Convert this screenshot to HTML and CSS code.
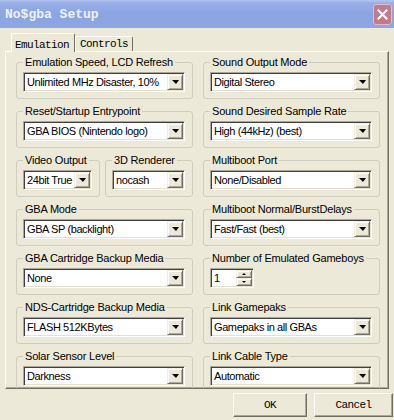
FILE: index.html
```html
<!DOCTYPE html>
<html lang="en">
<head>
  <meta charset="UTF-8">
  <meta name="viewport" content="width=device-width, initial-scale=1.0">
  <title>No$gba Setup</title>
  <link rel="stylesheet" href="styles.css">
</head>
<body>
  <div class="dialog">
    <div class="caption">
      <span class="caption__title">No$gba Setup</span>
      <span class="caption__close">
        <svg width="11" height="11" viewBox="0 0 11 11"><path d="M1.5 1.5 L9.5 9.5 M9.5 1.5 L1.5 9.5" stroke="#fff" stroke-width="2" stroke-linecap="square"/></svg>
      </span>
    </div>

    <div class="client">
      <div class="tabs">
        <div class="tabs__item tabs__item--active">Emulation</div>
        <div class="tabs__item">Controls</div>
      </div>

      <div class="page">
        <!-- left column -->
        <div class="page__col">
          <fieldset class="group">
            <legend>Emulation Speed, LCD Refresh</legend>
            <div class="combo"><span class="combo__text">Unlimited MHz Disaster, 10%</span><span class="combo__btn"></span></div>
          </fieldset>
          <fieldset class="group">
            <legend>Reset/Startup Entrypoint</legend>
            <div class="combo"><span class="combo__text">GBA BIOS (Nintendo logo)</span><span class="combo__btn"></span></div>
          </fieldset>
          <div class="group-row">
            <fieldset class="group group--video">
              <legend>Video Output</legend>
              <div class="combo"><span class="combo__text">24bit True</span><span class="combo__btn"></span></div>
            </fieldset>
            <fieldset class="group group--renderer">
              <legend>3D Renderer</legend>
              <div class="combo"><span class="combo__text">nocash</span><span class="combo__btn"></span></div>
            </fieldset>
          </div>
          <fieldset class="group">
            <legend>GBA Mode</legend>
            <div class="combo"><span class="combo__text">GBA SP (backlight)</span><span class="combo__btn"></span></div>
          </fieldset>
          <fieldset class="group">
            <legend>GBA Cartridge Backup Media</legend>
            <div class="combo"><span class="combo__text">None</span><span class="combo__btn"></span></div>
          </fieldset>
          <fieldset class="group">
            <legend>NDS-Cartridge Backup Media</legend>
            <div class="combo"><span class="combo__text">FLASH 512KBytes</span><span class="combo__btn"></span></div>
          </fieldset>
          <fieldset class="group">
            <legend>Solar Sensor Level</legend>
            <div class="combo"><span class="combo__text">Darkness</span><span class="combo__btn"></span></div>
          </fieldset>
        </div>

        <!-- right column -->
        <div class="page__col">
          <fieldset class="group">
            <legend>Sound Output Mode</legend>
            <div class="combo"><span class="combo__text">Digital Stereo</span><span class="combo__btn"></span></div>
          </fieldset>
          <fieldset class="group">
            <legend>Sound Desired Sample Rate</legend>
            <div class="combo"><span class="combo__text">High (44kHz) (best)</span><span class="combo__btn"></span></div>
          </fieldset>
          <fieldset class="group">
            <legend>Multiboot Port</legend>
            <div class="combo"><span class="combo__text">None/Disabled</span><span class="combo__btn"></span></div>
          </fieldset>
          <fieldset class="group">
            <legend>Multiboot Normal/BurstDelays</legend>
            <div class="combo"><span class="combo__text">Fast/Fast (best)</span><span class="combo__btn"></span></div>
          </fieldset>
          <fieldset class="group">
            <legend>Number of Emulated Gameboys</legend>
            <div class="spin">
              <span class="spin__text">1</span>
              <span class="spin__btns"><span class="spin__up"></span><span class="spin__down"></span></span>
            </div>
          </fieldset>
          <fieldset class="group">
            <legend>Link Gamepaks</legend>
            <div class="combo"><span class="combo__text">Gamepaks in all GBAs</span><span class="combo__btn"></span></div>
          </fieldset>
          <fieldset class="group">
            <legend>Link Cable Type</legend>
            <div class="combo"><span class="combo__text">Automatic</span><span class="combo__btn"></span></div>
          </fieldset>
        </div>
      </div>

      <div class="actions">
        <button class="btn btn--ok">OK</button>
        <button class="btn btn--cancel">Cancel</button>
      </div>
    </div>
  </div>
</body>
</html>
```

FILE: styles.css
```css
* {
  box-sizing: border-box;
}
body {
  margin: 0;
  background: #ece9d8;
  color: #000;
  font-family: "Liberation Sans", Arial, sans-serif;
  font-size: 11px;
}

/* window */
.dialog {
  width: 394px;
  height: 420px;
  overflow: hidden;
  background: #ece9d8;
}
.caption {
  height: 28px;
  display: flex;
  align-items: center;
  justify-content: space-between;
  padding: 0 2px 0 5px;
  background: linear-gradient(#b6c5ef 0, #97aee7 3px, #8ba4e2 50%, #8ea7e3 100%);
}
.caption__title {
  font-family: "Liberation Mono", monospace;
  font-size: 13px;
  font-weight: bold;
  color: #eef1fb;
}
.caption__close {
  width: 19px;
  height: 21px;
  display: flex;
  align-items: center;
  justify-content: center;
  border: 1px solid #e0bcc6;
  border-radius: 3px;
  background: #c07b8c;
}

/* tabs */
.tabs {
  height: 23px;
  display: flex;
  align-items: flex-end;
  padding: 5px 0 0 11px;
}
.tabs__item {
  height: 15px;
  padding-left: 3px;
  font-family: "Liberation Mono", monospace;
  font-size: 11px;
  line-height: 14px;
  letter-spacing: -0.6px;
  border-top: 1px solid #fff;
  border-left: 1px solid #fff;
  border-right: 1px solid #716f64;
  border-radius: 2px 2px 0 0;
  background: #ece9d8;
}
.tabs__item--active {
  position: relative;
  width: 64px;
  height: 19px;
  margin-bottom: -1px;
  padding-top: 4px;
}
.tabs__item:not(.tabs__item--active) {
  width: 58px;
  padding-left: 4px;
}

/* tab page */
.page {
  height: 338px;
  margin: 0 5px;
  padding: 4px 8px 0 10px;
  overflow: hidden;
  display: grid;
  grid-template-columns: 177px 177px;
  column-gap: 10px;
  align-items: start;
  border: 1px solid;
  border-color: #fff #716f64 #716f64 #fff;
  box-shadow: inset -1px -1px 0 #aca899;
}
.page__col {
  display: flex;
  flex-direction: column;
  gap: 6px;
}
.group {
  min-width: 0;
  margin: 0;
  padding: 3px 7px 6px 6px;
  border: 1px solid #cfcdbd;
  border-radius: 3px;
}
.group legend {
  padding: 0 2px;
  line-height: 13px;
  letter-spacing: -0.2px;
  white-space: nowrap;
}
.group-row {
  display: flex;
  gap: 5px;
}
.group--video {
  width: 84px;
}
.group--renderer {
  width: 88px;
}

/* combo box */
.combo {
  height: 20px;
  display: flex;
  align-items: stretch;
  padding: 1px;
  background: #fff;
  border: 1px solid;
  border-color: #aca899 #fff #fff #aca899;
  box-shadow: inset 1px 1px 0 #404040, inset -1px -1px 0 #e4e1d3;
}
.combo__text {
  flex: 1;
  min-width: 0;
  padding-left: 2px;
  overflow: hidden;
  white-space: nowrap;
  line-height: 16px;
  letter-spacing: -0.4px;
}
.combo__btn,
.spin__up,
.spin__down {
  display: flex;
  align-items: center;
  justify-content: center;
  background: #ece9d8;
  border: 1px solid;
  border-color: #f1efe2 #716f64 #716f64 #f1efe2;
  box-shadow: inset 1px 1px 0 #fff, inset -1px -1px 0 #aca899;
}
.combo__btn {
  flex: none;
  width: 16px;
}
.combo__btn:after {
  content: "";
  border-left: 4px solid transparent;
  border-right: 3px solid transparent;
  border-top: 4px solid #000;
}

/* spinner */
.spin {
  width: 44px;
  height: 20px;
  display: flex;
  padding: 1px;
  background: #fff;
  border: 1px solid;
  border-color: #aca899 #fff #fff #aca899;
  box-shadow: inset 1px 1px 0 #404040, inset -1px -1px 0 #e4e1d3;
}
.spin__text {
  flex: 1;
  padding-left: 2px;
  line-height: 16px;
}
.spin__btns {
  width: 16px;
  display: flex;
  flex-direction: column;
}
.spin__up,
.spin__down {
  flex: 1;
}
.spin__up:after {
  content: "";
  border-left: 2px solid transparent;
  border-right: 2px solid transparent;
  border-bottom: 2px solid #000;
}
.spin__down:after {
  content: "";
  border-left: 2px solid transparent;
  border-right: 2px solid transparent;
  border-top: 2px solid #000;
}

/* buttons */
.actions {
  display: flex;
  justify-content: flex-end;
  gap: 7px;
  padding: 4px 1px 0 0;
}
.btn {
  height: 24px;
  padding: 0;
  font-family: "Liberation Mono", monospace;
  font-size: 11px;
  letter-spacing: -0.6px;
  color: #000;
  background: #ece9d8;
  border: 1px solid;
  border-color: #fff #716f64 #716f64 #fff;
  box-shadow: inset -1px -1px 0 #aca899;
}
.btn--ok {
  width: 74px;
}
.btn--cancel {
  width: 79px;
}
```
